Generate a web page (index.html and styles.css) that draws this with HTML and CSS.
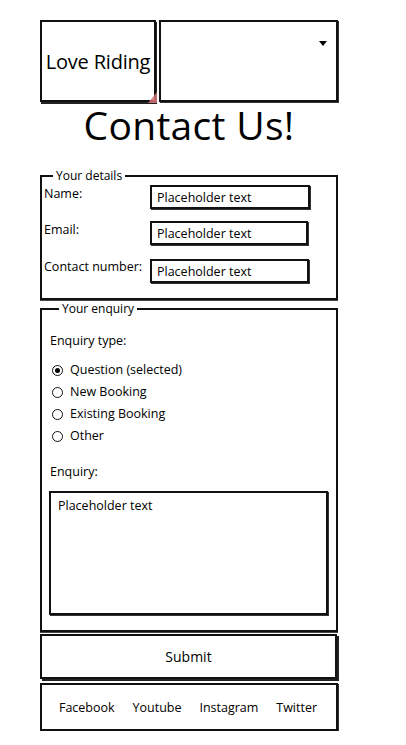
FILE: index.html
```html
<!DOCTYPE html>
<html lang="en">
<head>
    <meta charset="UTF-8">
    <meta name="viewport" content="width=device-width, initial-scale=1.0">
    <title>Contact Us - Love Riding</title>
    <link rel="stylesheet" href="styles.css">
</head>
<body>
    <div class="page">
        <header class="top-bar">
            <div class="logo">Love Riding<span class="note-mark"></span></div>
            <div class="menu"><span class="caret"></span></div>
        </header>

        <h1>Contact Us!</h1>

        <form id="contactForm">
            <fieldset class="group details">
                <legend>Your details</legend>
                <div class="form-row">
                    <label for="name">Name:</label>
                    <input type="text" id="name" placeholder="Placeholder text" class="w-160">
                </div>
                <div class="form-row">
                    <label for="email">Email:</label>
                    <input type="email" id="email" placeholder="Placeholder text" class="w-158">
                </div>
                <div class="form-row last-row">
                    <label for="phone">Contact number:</label>
                    <input type="tel" id="phone" placeholder="Placeholder text" class="w-159">
                </div>
            </fieldset>

            <fieldset class="group enquiry">
                <legend>Your enquiry</legend>
                <p class="field-title">Enquiry type:</p>
                <div class="radio-list">
                    <label class="radio"><span class="dot checked"></span>Question (selected)</label>
                    <label class="radio"><span class="dot"></span>New Booking</label>
                    <label class="radio"><span class="dot"></span>Existing Booking</label>
                    <label class="radio"><span class="dot"></span>Other</label>
                </div>
                <p class="field-title enquiry-label">Enquiry:</p>
                <textarea id="message" placeholder="Placeholder text"></textarea>
            </fieldset>

            <button type="button" class="submit-btn">Submit</button>
        </form>

        <footer class="social">
            <a href="#">Facebook</a>
            <a href="#">Youtube</a>
            <a href="#">Instagram</a>
            <a href="#">Twitter</a>
        </footer>
    </div>
</body>
</html>
```

FILE: styles.css
```css
body {
    margin: 0;
    font-family: "Open Sans", "DejaVu Sans", sans-serif;
    color: #000;
    background: #fff;
}
.page {
    width: 298px;
    margin-left: 40px;
    padding-top: 20px;
}
.top-bar {
    display: flex;
    gap: 3px;
    height: 82px;
}
.logo {
    position: relative;
    width: 116px;
    box-sizing: border-box;
    border: 2px solid #111;
    box-shadow: 1px 2px 0 #222;
    display: flex;
    align-items: center;
    justify-content: center;
    font-size: 20px;
    letter-spacing: -0.2px;
    white-space: nowrap;
}
.note-mark {
    position: absolute;
    right: -3px;
    bottom: -3px;
    width: 9px;
    height: 11px;
    background: #d9777a;
    clip-path: polygon(0 100%, 100% 0, 100% 100%);
    opacity: 0.85;
}
.menu {
    flex: 1;
    position: relative;
    border: 2px solid #111;
    box-shadow: 1px 1px 0 #333;
}
.caret {
    position: absolute;
    top: 19px;
    right: 9px;
    width: 0;
    height: 0;
    border-left: 4px solid transparent;
    border-right: 4px solid transparent;
    border-top: 5px solid #000;
}
h1 {
    margin: 0;
    text-align: center;
    font-size: 39px;
    font-weight: 400;
    line-height: 46px;
    height: 48px;
    letter-spacing: 0.3px;
}
.group {
    margin: 0;
    padding: 0;
    border: 2px solid #111;
    box-shadow: 0 1px 0 #444;
    font-size: 12.5px;
    min-width: 0;
}
.group legend {
    margin-left: 9px;
    padding: 0 3px;
    font-size: 12px;
    line-height: 14px;
}
.details {
    margin-top: 19px;
    padding: 2px 0 15px 2px;
    height: 131px;
    box-sizing: border-box;
}
.form-row {
    display: grid;
    grid-template-columns: 106px auto;
    align-items: start;
    margin-bottom: 12px;
}
.form-row label {
    line-height: 16px;
    padding-top: 1px;
}
.last-row {
    padding-top: 2px;
    margin-bottom: 0;
}
.last-row label {
    padding-top: 0;
}
.form-row input {
    height: 24px;
    box-sizing: border-box;
    border: 2px solid #111;
    box-shadow: 1px 1px 0 #333;
    padding: 2px 5px;
    font-family: inherit;
    font-size: 12.5px;
}
.w-160 { width: 160px; }
.w-158 { width: 158px; }
.w-159 { width: 159px; }
input::placeholder,
textarea::placeholder {
    color: #000;
}
.enquiry {
    margin-top: 2px;
    padding: 17px 8px 14px 8px;
    height: 330px;
    box-sizing: border-box;
}
.field-title {
    margin: 0;
    line-height: 16px;
}
.radio-list {
    margin-top: 13px;
    display: flex;
    flex-direction: column;
    gap: 6px;
}
.radio {
    display: flex;
    align-items: center;
    gap: 7px;
    line-height: 16px;
    padding-left: 2px;
}
.dot {
    width: 9px;
    height: 9px;
    border: 1px solid #111;
    border-radius: 50%;
    position: relative;
}
.dot.checked::after {
    content: "";
    position: absolute;
    top: 2px;
    left: 2px;
    width: 5px;
    height: 5px;
    border-radius: 50%;
    background: #000;
}
.enquiry-label {
    margin-top: 20px;
}
textarea {
    display: block;
    margin-top: 11px;
    margin-left: -1px;
    width: 279px;
    height: 124px;
    box-sizing: border-box;
    border: 2px solid #111;
    box-shadow: 1px 1px 0 #333;
    padding: 4px 7px;
    font-family: inherit;
    font-size: 12.5px;
    resize: none;
}
.submit-btn {
    display: block;
    width: 297px;
    height: 45px;
    margin-top: 2px;
    background: #fff;
    border: 2px solid #111;
    box-shadow: 2px 2px 0 #222;
    font-family: inherit;
    font-size: 14px;
    color: #000;
    cursor: pointer;
}
.social {
    margin-top: 4px;
    height: 48px;
    box-sizing: border-box;
    border: 2px solid #111;
    box-shadow: 1px 1px 0 #333;
    display: flex;
    align-items: center;
    justify-content: space-around;
    padding: 0 10px 0 8px;
    font-size: 12.5px;
}
.social a {
    color: #000;
    text-decoration: none;
}
```
